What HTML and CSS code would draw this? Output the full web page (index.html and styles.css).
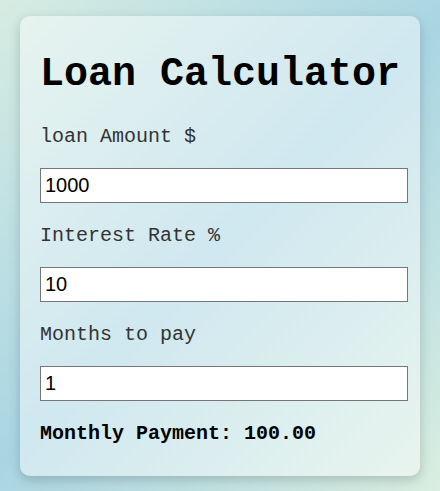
FILE: index.html
```html
<!DOCTYPE html>
<html>
<head>
<meta charset="utf-8">
<link rel="stylesheet" href="styles.css">
</head>
<body>
<div class="card">
  <h1 class="title">Loan Calculator</h1>
  <label class="label" for="amount">loan Amount $</label>
  <input class="field" id="amount" type="text" value="1000">
  <label class="label" for="rate">Interest Rate %</label>
  <input class="field" id="rate" type="text" value="10">
  <label class="label" for="months">Months to pay</label>
  <input class="field" id="months" type="text" value="1">
  <p class="result">Monthly Payment: 100.00</p>
</div>
</body>
</html>
```
FILE: styles.css
```css
html, body {
  margin: 0;
  height: 100%;
}
body {
  background: linear-gradient(135deg, #d6ece2 0%, #a9d5e3 50%, #d9eee0 100%);
  font-family: "Liberation Mono", "Courier New", monospace;
  padding: 16px 20px;
  box-sizing: border-box;
}
.card {
  width: 400px;
  height: 460px;
  box-sizing: border-box;
  padding: 39px 20px 20px;
  border-radius: 10px;
  background: rgba(255, 255, 255, 0.45);
  box-shadow: 0 4px 12px rgba(0, 0, 0, 0.18);
  display: flex;
  flex-direction: column;
  align-items: flex-start;
}
.title {
  margin: 0 0 32px;
  font-size: 40px;
  line-height: 40px;
  font-weight: bold;
  color: #000;
  white-space: nowrap;
}
.label {
  display: block;
  font-size: 20px;
  line-height: 20px;
  color: #333;
  margin-bottom: 21px;
}
.field {
  display: block;
  width: 368px;
  height: 35px;
  box-sizing: border-box;
  border: 1px solid #767676;
  border-radius: 0;
  padding: 0 4px;
  margin: 0 0 23px;
  font-family: "Liberation Sans", Arial, sans-serif;
  font-size: 20px;
  color: #000;
  background: #fff;
  flex: none;
}
.result {
  margin: 0;
  font-size: 20px;
  line-height: 20px;
  font-weight: bold;
  color: #000;
}
```
